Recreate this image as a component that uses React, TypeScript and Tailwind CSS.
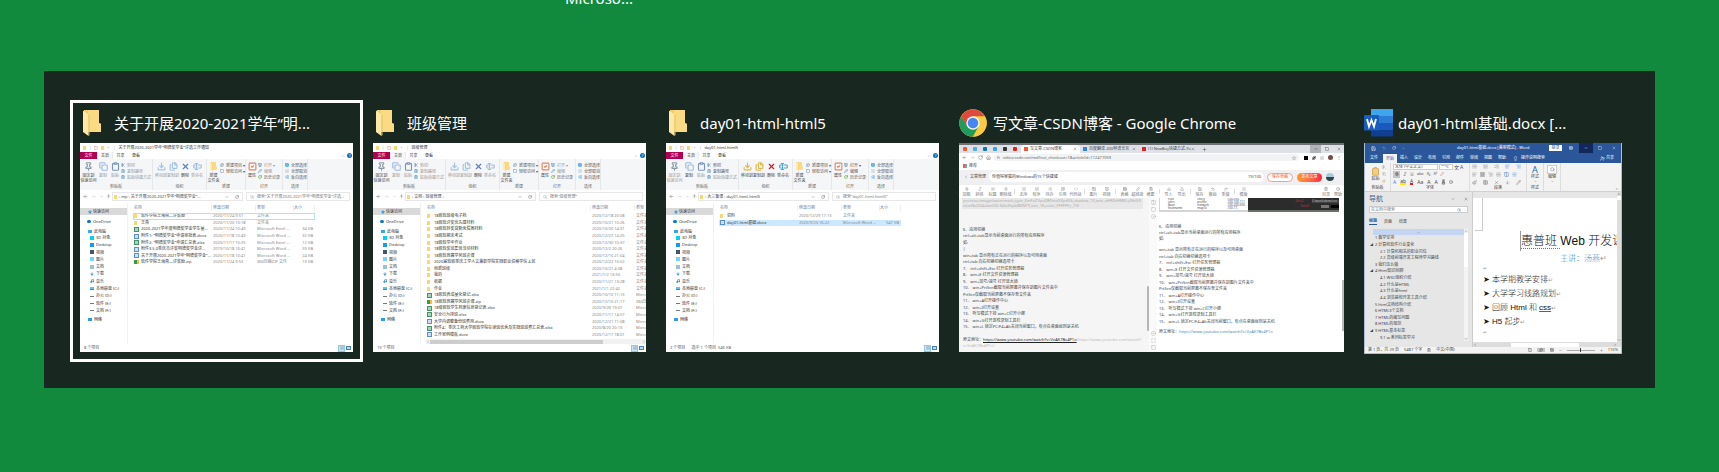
import type { ReactNode } from 'react'
import {
  AlignCenter, AlignJustify, AlignLeft, AlignRight, ArrowDown, ArrowLeft, ArrowRight, ArrowUp, Bold, ChevronDown, ChevronLeft, ChevronRight,
  ChevronUp, CircleDot, Clipboard, ClipboardCopy, ClipboardList, Code, Columns2, Copy, Download, Files, Heading, Home, Image, Italic, Lightbulb,
  Link, List, ListChecks, ListOrdered, Lock, Maximize, Menu, Minus, MonitorPlay, Music, Paintbrush, Pencil, Pin, Plus, Puzzle, Quote, Redo2,
  RotateCw, Save, Scissors, Search, Square, SquareCheck, Star, Strikethrough, Table, TextCursorInput, Underline, Undo2, Upload, UserPlus, X,
} from 'lucide-react'
import type { LucideIcon } from 'lucide-react'
import { clsx } from 'clsx'

type FileKind = 'folder' | 'xls' | 'doc' | 'zip'

type FileEntry = {
  kind: FileKind
  name: string
  date: string
  type: string
  size?: string
  state?: 'focus' | 'selected'
}

const SCHOLARSHIP_FILES: FileEntry[] = [
  { kind: 'folder', name: '软件学院王海燕—评奖励', date: '2020/11/24 9:51', type: '文件夹', state: 'focus' },
  { kind: 'folder', name: '王燕', date: '2020/11/20 10:18', type: '文件夹' },
  { kind: 'xls', name: '2020-2021学年度明德奖学金学生量...', date: '2020/11/24 10:49', type: 'Microsoft Excel ...', size: '34 KB' },
  { kind: 'doc', name: '附件1: “明德奖学金”申请审批表.docx', date: '2020/11/18 10:49', type: 'Microsoft Word ...', size: '32 KB' },
  { kind: 'xls', name: '附件2: “明德奖学金”申请汇总表.xlsx', date: '2020/11/17 10:25', type: 'Microsoft Excel ...', size: '12 KB' },
  { kind: 'doc', name: '附件3.5.0重庆市评奖明德奖学金评...', date: '2019/10/18 16:41', type: 'Microsoft Word ...', size: '59 KB' },
  { kind: 'doc', name: '关于开展2020-2021学年“明德奖学金”...', date: '2020/11/18 10:41', type: 'Microsoft Word ...', size: '24 KB' },
  { kind: 'zip', name: '软件学院王海燕—评奖励.zip', date: '2020/11/24 9:53', type: '360压缩ZIP 文件', size: '13 KB' },
]

const CLASS_FILES: FileEntry[] = [
  { kind: 'folder', name: '18嵌软班级电子档', date: '2020/12/18 20:08', type: '文件夹' },
  { kind: 'folder', name: '18嵌软评奖优先建材料', date: '2020/10/21 10:26', type: '文件夹' },
  { kind: 'folder', name: '18嵌软转奖贷勤免贫困材料', date: '2020/10/20 14:31', type: '文件夹' },
  { kind: 'folder', name: '18嵌软期末考试', date: '2020/12/22 14:25', type: '文件夹' },
  { kind: 'folder', name: '18嵌软学年作业', date: '2020/12/30 10:37', type: '文件夹' },
  { kind: 'folder', name: '18嵌软奖惩集体活动材料', date: '2020/12/2 20:26', type: '文件夹' },
  { kind: 'folder', name: '18嵌软竞赛学风班会课', date: '2020/12/10 21:04', type: '文件夹' },
  { kind: 'folder', name: '2020届软嵌重庆工学人文兼职学院实践职业资格学信 4 区', date: '2020/12/22 10:52', type: '文件夹' },
  { kind: 'folder', name: '创新班级', date: '2020/10/21 4:38', type: '文件夹' },
  { kind: 'folder', name: '我的', date: '2021/1/2 13:50', type: '文件夹' },
  { kind: 'folder', name: '收据', date: '2020/11/21 13:28', type: '文件夹' },
  { kind: 'folder', name: '作业', date: '2021/1/1 22:42', type: '文件夹' },
  { kind: 'xls', name: '18嵌软养成量化登记.xlsx', date: '2020/10/10 11:13', type: 'Micro' },
  { kind: 'zip', name: '18嵌软竞赛学风班会课.zip', date: '2020/12/10 21:17', type: '360压' },
  { kind: 'xls', name: '18级嵌软学生档案信息登记表.xlsx', date: '2020/9/26 19:07', type: 'Micro' },
  { kind: 'xls', name: '安全行为排班.xlsx', date: '2020/11/11 14:57', type: 'Micro' },
  { kind: 'doc', name: '大学内调整备份班费用.docx', date: '2020/12/21 11:08', type: 'Micro' },
  { kind: 'xls', name: '附件4：重庆工商大学嵌软学院在读班优秀及实践班班费汇总表.xlsx', date: '2020/8/20 20:13', type: 'Micro' },
  { kind: 'doc', name: '工作室例模板.docx', date: '2020/12/17 18:01', type: 'Micro' },
]

const HTML_FILES: FileEntry[] = [
  { kind: 'folder', name: '资料', date: '2020/12/29 17:13', type: '文件夹' },
  { kind: 'doc', name: 'day01-html基础.docx', date: '2020/9/23 16:22', type: 'Microsoft Word ...', size: '547 KB', state: 'selected' },
]

const PC_PLACES = [
  { label: '3D 对象', color: 'bg-cyan-400' },
  { label: 'Desktop', color: 'bg-[#1a9bf0]' },
  { label: '视频', color: 'bg-slate-600' },
  { label: '图片', color: 'bg-sky-300' },
  { label: '文档', color: 'bg-[#9dbfd8]' },
]

const DRIVES = ['本地磁盘 (C:)', '办公 (D:)', '软件 (E:)', '文档 (F:)']

const EDITOR_LINES = [
  '6、应用切换', 'ctrl+alt+tab显示当前桌面运行的所有应用程序', '如:', '|', 'win+tab 显示所有正在运行的程序以及可用桌面', 'ctrl+tab 向右切换切换选项卡',
  '7、 ctrl+shift+Esc 打开任务管理器', '8、 win+E 打开文件资源管理器', '9、 win+加号/减号 打开放大镜', '10、 win+PrtScn截取当前屏幕并保存到图片文件夹中',
  'PrtScn仅截取当前屏幕不保存至文件夹', '11、 win+A打开操作中心', '12、 win+I打开设置', '13、 听写模式下按 win+C打开小娜', '14、 win+G打开游戏录制工具栏',
  '15、 win+L 锁定PC/F4+Alt关闭当前窗口，有点在桌面就则是关机', '',
]

const PREVIEW_INTRO = ['6、应用切换', 'ctrl+alt+tab显示当前桌面运行的所有应用程序', '如:']

const PREVIEW_LINES = [
  'win+tab 显示所有正在运行的程序以及可用桌面', 'ctrl+tab 向右切换切换选项卡', '7、 ctrl+shift+Esc 打开任务管理器', '8、 win+E 打开文件资源管理器',
  '9、 win+加号/减号 打开放大镜', '10、 win+PrtScn截取当前屏幕并保存到图片文件夹中', 'PrtScn仅截取当前屏幕不保存至文件夹', '11、 win+A打开操作中心', '12、 win+I打开设置',
  '13、 听写模式下按 win+C打开小娜', '14、 win+G打开游戏录制工具栏', '15、 win+L 锁定PC/F4+Alt关闭当前窗口，有点在桌面就则是关机',
]

const OUTLINE = [
  { text: '1 教学安排', level: 0 },
  { text: '2 计算机软件行业变化', level: 0, open: true },
  { text: '2.1 计算机相关的职业岗位', level: 1 },
  { text: '2.2 高级前端开发工程师学习路线', level: 1 },
  { text: '3 我们怎么做', level: 0 },
  { text: '4 Html知识回顾', level: 0, open: true },
  { text: '4.1 W3C组织介绍', level: 1 },
  { text: '4.2 什么是HTML', level: 1 },
  { text: '4.3 什么是html', level: 1 },
  { text: '4.4 浏览器和开发工具介绍', level: 1 },
  { text: '5 html文档结构介绍', level: 0 },
  { text: '6 HTML3个文档', level: 0 },
  { text: '7 HTML的编写问题', level: 0 },
  { text: '8 HTML的规范', level: 0 },
  { text: '9 HTML基本标签', level: 0, open: true },
  { text: '9.1 w 系列标签学习', level: 1 },
]

function FolderIcon({ className }: { className?: string }) {
  return (
    <svg viewBox="0 0 18 26" className={className} aria-hidden="true">
      <path d="M1 0h15v13l2 1v8H1z" fill="#f3cd68" />
      <path d="M5 0h11v13l2 1v8H5z" fill="#fadb83" />
      <path d="M0 0.500l5.500 4V26L0 22z" fill="#ffe9a9" />
      <path d="M5.500 4.500L6.500 4v21l-1 1z" fill="#e9c05c" />
    </svg>
  )
}

function ChromeIcon({ className }: { className?: string }) {
  return (
    <svg viewBox="0 0 48 48" className={className} aria-hidden="true">
      <circle cx="24" cy="24" r="23.500" fill="#fcc934" />
      <path d="M3.650 12.250A23.500 23.500 0 0 0 24 47.500L33.500 30 24 24 14.500 29.500z" fill="#1f9d58" />
      <path d="M44.350 12.250H24L34 30 24 47.500A23.500 23.500 0 0 0 44.350 12.250z" fill="#fcca3f" />
      <path d="M3.650 12.250L14 30l10-17.750h20.350A23.500 23.500 0 0 0 3.650 12.250z" fill="#de4b3e" />
      <circle cx="24" cy="24" r="11.500" fill="#f3f3f3" />
      <circle cx="24" cy="24" r="9" fill="#4688f1" />
    </svg>
  )
}

function WordIcon({ className }: { className?: string }) {
  return (
    <svg viewBox="0 0 30 28" className={className} aria-hidden="true">
      <path d="M7 0h22v7H7z" fill="#41a5ee" />
      <path d="M7 7h22v7H7z" fill="#2b7cd3" />
      <path d="M7 14h22v7H7z" fill="#185abd" />
      <path d="M7 21h22v6.500H7z" fill="#103f91" />
      <rect y="6" width="15" height="15.500" rx="1" fill="#1a5dbe" />
      <path d="M3 10l2 7.500L7.500 11l2.500 6.500L12 10" fill="none" stroke="#fff" strokeWidth="1.800" />
    </svg>
  )
}

function FileIcon({ kind }: { kind: FileKind }) {
  if (kind === 'folder') return <span className="mr-[2px] h-[4px] w-[3px] shrink-0 bg-[#f8d775]" />
  if (kind === 'zip') {
    return (
      <span className="grid h-[4px] w-[5px] shrink-0 grid-cols-2 bg-[#1b7fc4]">
        <span className="bg-[#3a9a4c]" />
        <span className="bg-[#f0c030]" />
      </span>
    )
  }
  return (
    <span className={clsx('flex h-[5px] w-[5px] shrink-0 border', kind === 'xls' ? 'border-[#3f9668] bg-[#a9d3bb]' : 'border-[#5a8fd0] bg-[#cfe0f5]')} />
  )
}

type RibbonButtonProps = { icon: LucideIcon; label: string; sub?: string; color?: string; dim?: boolean; wide?: boolean }

function RibbonButton({ icon: Icon, label, sub, color = 'text-[#7fa8cc]', dim, wide }: RibbonButtonProps) {
  return (
    <button className={clsx('flex shrink-0 flex-col items-center whitespace-nowrap', wide ? 'w-[17px]' : 'w-[12px]', dim ? 'text-[#999]' : 'text-[#444]')}>
      <Icon size={9} strokeWidth={3} className={clsx('mb-[2px]', color)} />
      <span>{label}</span>
      {sub && <span>{sub}</span>}
    </button>
  )
}

function SmallCommand({ icon: Icon, label, color = 'text-[#6fa3cf]', dim }: RibbonButtonProps) {
  return (
    <button className={clsx('flex h-[6px] items-center gap-[2px] whitespace-nowrap', dim ? 'text-[#999]' : 'text-[#555]')}>
      <Icon size={4} strokeWidth={4} className={color} />
      {label}
    </button>
  )
}

function RibbonGroup({ label, width, children }: { label: string; width: string; children: ReactNode }) {
  return (
    <div className={clsx('flex shrink-0 flex-col border-r border-[#e6e7e8]', width)}>
      <div className="flex h-[25px] items-start pt-[3px]">{children}</div>
      <div className="text-center text-[#666]">{label}</div>
    </div>
  )
}

function ExplorerRibbon({ active }: { active?: boolean }) {
  const dim = !active
  return (
    <div className="flex h-[31px] overflow-hidden bg-[#f5f6f7] text-[4px] leading-[5px]">
      <RibbonGroup label="剪贴板" width="w-[73px]">
        <RibbonButton icon={Pin} label="固定到" sub="快速访问" color="text-[#8b9aa5]" wide dim={active} />
        <RibbonButton icon={Copy} label="复制" color="text-[#9dbbe0]" dim={dim} />
        <RibbonButton icon={Clipboard} label="粘贴" color="text-[#7b94bb]" dim />
        <div className="flex flex-col">
          <SmallCommand icon={Scissors} label="剪切" dim={dim} />
          <SmallCommand icon={ClipboardCopy} label="复制路径" dim={dim} />
          <SmallCommand icon={ClipboardList} label="粘贴快捷方式" dim />
        </div>
      </RibbonGroup>
      <RibbonGroup label="组织" width="w-[54px]">
        <span className="w-[2px]" />
        <RibbonButton icon={Download} label="移动到" color={active ? 'text-[#e3b94c]' : 'text-[#a7c3e3]'} dim={dim} />
        <RibbonButton icon={Files} label="复制到" color={active ? 'text-[#e3b94c]' : 'text-[#a7c3e3]'} dim={dim} />
        <RibbonButton icon={X} label="删除" color={active ? 'text-[#d8161b]' : 'text-[#5b7fb5]'} />
        <RibbonButton icon={TextCursorInput} label="重命名" color={active ? 'text-[#4c9fd8]' : 'text-[#9dbbe0]'} dim={dim} />
      </RibbonGroup>
      <RibbonGroup label="新建" width="w-[39px]">
        <button className="flex w-[13px] flex-col items-center whitespace-nowrap text-[#444]">
          <FolderIcon className="mb-[2px] h-[9px] w-[7px]" />
          <span>新建</span>
          <span>文件夹</span>
        </button>
        <div className="flex flex-col">
          <SmallCommand icon={Files} label="新建项目 ▾" color="text-[#8fa9c4]" />
          <SmallCommand icon={Square} label="轻松访问 ▾" color="text-[#8fa9c4]" />
        </div>
      </RibbonGroup>
      <RibbonGroup label="打开" width="w-[37px]">
        <RibbonButton icon={SquareCheck} label="属性" color="text-[#e08868]" />
        <div className="flex flex-col">
          <SmallCommand icon={MonitorPlay} label="打开 ▾" dim={dim} />
          <SmallCommand icon={Pencil} label="编辑" dim={dim} />
          <SmallCommand icon={RotateCw} label="历史记录" color="text-[#6fae55]" />
        </div>
      </RibbonGroup>
      <RibbonGroup label="选择" width="w-[25px]">
        <div className="flex flex-col pl-[2px]">
          <SmallCommand icon={Table} label="全部选择" color="text-[#4aa6ea]" />
          <SmallCommand icon={List} label="全部取消" color="text-[#b8c6d2]" />
          <SmallCommand icon={ListChecks} label="反向选择" color="text-[#4aa6ea]" />
        </div>
      </RibbonGroup>
    </div>
  )
}

function ExplorerSidebar() {
  return (
    <nav className="w-[48px] shrink-0 border-r border-[#f0f0f0] pt-[5px] text-[4px] leading-[7px] whitespace-nowrap text-[#333]">
      <div className="flex h-[7px] items-center gap-[1px] bg-[#d9d9d9] pl-[8px]">
        <Star size={4} className="fill-[#3b9fe8] text-[#3b9fe8]" />快速访问
      </div>
      <div className="mt-[3px] flex h-[7px] items-center gap-[2px] pl-[7px]">
        <span className="h-[3px] w-[4px] rounded-full bg-[#0a78d0]" />OneDrive
      </div>
      <div className="mt-[3px] flex h-[6px] items-center gap-[2px] pl-[8px]">
        <span className="h-[3px] w-[4px] bg-[#3aa7e5]" />此电脑
      </div>
      <ul className="grid h-[80px] grid-rows-[repeat(11,minmax(0,1fr))] pl-[10px]">
        {PC_PLACES.map(place => (
          <li key={place.label} className="flex items-center gap-[2px]">
            <span className={clsx('h-[4px] w-[4px]', place.color)} />{place.label}
          </li>
        ))}
        <li className="flex items-center gap-[2px]"><ArrowDown size={4} strokeWidth={5} className="text-[#2688d8]" />下载</li>
        <li className="flex items-center gap-[2px]"><Music size={4} strokeWidth={4} className="text-[#2688d8]" />音乐</li>
        {DRIVES.map((drive, i) => (
          <li key={drive} className="flex items-center gap-[2px]">
            <span className={clsx('w-[4px] border-b', i === 0 ? 'h-[3px] border-[#777] bg-[#5cc3ee]' : 'h-[2px] border-[#777]')} />{drive}
          </li>
        ))}
      </ul>
      <div className="mt-[2px] flex h-[7px] items-center gap-[2px] pl-[8px]">
        <span className="h-[3px] w-[4px] bg-[#2f9be0]" />网络
      </div>
    </nav>
  )
}

type ExplorerProps = { title: string; crumbs: string; search: string; files: FileEntry[]; status: string; wideName?: boolean; active?: boolean }

function ExplorerWindow({ title, crumbs, search, files, status, wideName, active }: ExplorerProps) {
  const nameWidth = wideName ? 'w-[165px]' : 'w-[79px]'
  return (
    <div className="flex h-[209px] w-[273px] flex-col overflow-hidden bg-white text-[4px] leading-[6px] text-[#333]">
      <div className="flex h-[9px] items-center gap-[3px] pl-[3px] whitespace-nowrap">
        <span className="h-[4px] w-[3px] bg-[#f8d775]" />
        <span className="text-[#aaa]">|</span>
        <SquareCheck size={4} className="text-[#d07a5c]" />
        <span className="h-[4px] w-[3px] bg-[#f8d775]" />
        <ChevronDown size={3} />
        <span className="text-[#aaa]">|</span>
        <span>{title}</span>
      </div>
      <div className="flex h-[7px] items-center text-center">
        <button className="h-full w-[17px] bg-[#b0004f] text-white">文件</button>
        <button className="h-full w-[16px] border-x border-[#e8e9ea] bg-[#f5f6f7]">主页</button>
        <button className="w-[15px]">共享</button>
        <button className="w-[16px]">查看</button>
        <ChevronUp size={4} className="mr-[2px] ml-auto text-[#888]" />
        <span className="mr-[1px] flex h-[5px] w-[5px] items-center justify-center rounded-full bg-[#0c6fc4] text-white">?</span>
      </div>
      <ExplorerRibbon active={active} />
      <div className="flex h-[13px] items-center pr-[3px] text-[#666]">
        <div className="flex w-[32px] items-center justify-between pr-[1px] pl-[3px]">
          <ArrowLeft size={5} /><ArrowRight size={5} className="text-[#ccc]" /><ChevronDown size={3} /><ArrowUp size={5} />
        </div>
        <div className="flex h-[9px] w-[131px] items-center gap-[2px] border border-[#e7e7e7] px-[1px] whitespace-nowrap text-[#444]">
          <span className="h-[4px] w-[3px] bg-[#f8d775]" />
          <span>{crumbs}</span>
          <ChevronDown size={4} className="mr-[4px] ml-auto" />
          <RotateCw size={4} className="mr-[2px]" />
        </div>
        <label className="ml-[3px] flex h-[9px] min-w-0 flex-1 items-center gap-[3px] border border-[#e7e7e7] pl-[3px]">
          <Search size={4} className="shrink-0 text-[#888]" />
          <input aria-label="搜索" placeholder={search} className="w-full min-w-0 outline-none placeholder:text-[#777]" />
        </label>
      </div>
      <div className="flex min-h-0 flex-1">
        <ExplorerSidebar />
        <div className="flex min-w-0 flex-1 flex-col overflow-hidden pl-[5px]">
          <table className="block text-left whitespace-nowrap">
            <thead className="block">
              <tr className="flex h-[9px] items-center text-[#6b7f9a]">
                <th className={clsx('shrink-0 border-r border-[#eee] pl-[1px] font-normal', nameWidth)}>名称</th>
                <th className="w-[44px] shrink-0 border-r border-[#eee] pl-[1px] font-normal">修改日期</th>
                <th className={clsx('shrink-0 pl-[1px] font-normal', !wideName && 'w-[38px] border-r border-[#eee]')}>类型</th>
                {!wideName && <th className="w-[21px] border-r border-[#eee] font-normal">大小</th>}
              </tr>
            </thead>
            <tbody className="mt-[1px] grid h-[125px] grid-rows-[repeat(19,minmax(0,1fr))]">
              {files.map(file => (
                <tr
                  key={file.name}
                  className={clsx(
                    'flex items-center',
                    !wideName && 'w-[182px]',
                    file.state === 'focus' && 'outline -outline-offset-1 outline-[#b5def7]',
                    file.state === 'selected' && 'bg-[#cce8ff]',
                  )}
                >
                  <td className={clsx('flex shrink-0 items-center gap-[2px] pl-[1px]', nameWidth)}>
                    <FileIcon kind={file.kind} />{file.name}
                  </td>
                  <td className="w-[44px] shrink-0 pl-[1px] text-[#888]">{file.date}</td>
                  <td className={clsx('shrink-0 pl-[1px] text-[#888]', !wideName && 'w-[38px]')}>{file.type}</td>
                  {!wideName && <td className="w-[19px] text-right text-[#888]">{file.size}</td>}
                </tr>
              ))}
            </tbody>
          </table>
          {wideName && (
            <div className="mt-[1px] flex h-[5px] items-center bg-[#f1f1f1] text-[#666]">
              <ChevronLeft size={4} /><span className="h-[4px] w-[173px] bg-[#cdcdcd]" /><ChevronRight size={4} className="ml-auto" />
            </div>
          )}
        </div>
      </div>
      <div className="flex h-[8px] items-center pl-[4px] whitespace-pre text-[#555]">
        {status}
        <span className="mr-[1px] ml-auto flex h-[7px] w-[7px] items-center justify-center border border-[#8cc8ec] bg-[#cde8f8]"><List size={4} /></span>
        <span className="mr-[2px] h-[4px] w-[5px] border border-[#4a7fb0] bg-[#bcd6ee]" />
      </div>
    </div>
  )
}

const FAVICONS = ['bg-[#fc5531]', 'bg-[#4aaee8]', 'bg-[#0a74c4]', 'bg-[#38a1ea]', 'bg-[#333]', 'bg-[#e32020]']

const MD_TOOLS: ({ icon: LucideIcon; label: string } | null)[] = [
  { icon: Bold, label: '加粗' }, { icon: Italic, label: '斜体' }, { icon: Heading, label: '标题' }, { icon: Strikethrough, label: '删除线' }, null,
  { icon: List, label: '无序' }, { icon: ListOrdered, label: '有序' }, { icon: ListChecks, label: '待办' }, { icon: Quote, label: '引用' }, { icon: Code, label: '代码块' }, null,
  { icon: Image, label: '图片' }, { icon: MonitorPlay, label: '视频' }, null,
  { icon: Table, label: '表格' }, { icon: Link, label: '超链接' }, { icon: ClipboardList, label: '摘要' }, null,
  { icon: Download, label: '导入' }, { icon: Upload, label: '导出' }, null,
  { icon: Save, label: '保存' }, { icon: Undo2, label: '撤销' }, { icon: Redo2, label: '重做' }, null,
  { icon: Menu, label: '模版' },
]

function ChromeTab({ color, title, active }: { color: string; title: string; active?: boolean }) {
  return (
    <div className={clsx('flex h-[8px] w-[59px] shrink-0 items-center gap-[2px] px-[3px]', active && 'rounded-t-sm bg-white')}>
      <span className={clsx('h-[4px] w-[4px] shrink-0', color)} />
      <span className="min-w-0 flex-1 whitespace-nowrap">{title}</span>
      <X size={4} className="shrink-0" />
    </div>
  )
}

function ChromeWindow() {
  return (
    <div className="flex h-[209px] w-[385px] flex-col overflow-hidden bg-white text-[4px] leading-[6px] text-[#444]">
      <div className="flex h-[10px] items-end border-t-2 border-[#6d7176] bg-[#dee1e6]">
        <div className="flex h-[8px] w-[62px] items-center gap-[6px] pl-[4px]">
          {FAVICONS.map(color => <span key={color} className={clsx('h-[4px] w-[4px] rounded-[1px]', color)} />)}
        </div>
        <ChromeTab color="bg-[#fc5531]" title="写文章-CSDN博客" active />
        <ChromeTab color="bg-[#2f86e8]" title="百度翻译-200种语言互" />
        <ChromeTab color="bg-[#e32020]" title="(1) NewBoy快捷方式-Yo" />
        <Plus size={5} className="mb-[1px] ml-[4px]" />
        <div className="ml-auto flex h-[8px] items-center text-[#333]">
          <span className="flex h-full w-[11px] items-center justify-center bg-[#b1b4b8]"><Minus size={4} /></span>
          <span className="flex w-[12px] justify-center"><Square size={4} /></span>
          <span className="flex w-[11px] justify-center"><X size={4} /></span>
        </div>
      </div>
      <div className="flex h-[9px] items-center gap-[3px] px-[3px] text-[#666]">
        <ArrowLeft size={5} /><ArrowRight size={5} className="text-[#bbb]" /><RotateCw size={5} /><Home size={5} />
        <div className="flex h-[7px] flex-1 items-center gap-[3px] rounded-full bg-[#f1f3f4] px-[3px]">
          <Lock size={3} />editor.csdn.net/md?not_checkout=1&amp;articleId=112477059
          <Star size={4} className="ml-auto" />
        </div>
        <div className="flex items-center gap-[4px] pl-[2px]">
          <span className="h-[4px] w-[4px] bg-black" />
          <Puzzle size={4} className="fill-[#444]" />
          <List size={4} />
          <span className="h-[5px] w-[5px] rounded-full bg-[#7a4a48]" />
          <span>⋮</span>
        </div>
      </div>
      <div className="flex h-[8px] items-center gap-[2px] pl-[4px]">
        <span className="h-[4px] w-[4px] border-l-2 border-[#e7604f] bg-[#63a7e8]" />推荐
      </div>
      <div className="flex h-[15px] items-center border-b border-[#eee] bg-[#f0f0f2] pl-[5px]">
        <a href="#articles" className="flex w-[25px] items-center gap-[2px] whitespace-nowrap"><ChevronLeft size={4} />文章管理</a>
        <label className="flex h-[10px] min-w-0 flex-1 items-center rounded-full bg-white px-[3px]">
          <input aria-label="文章标题" defaultValue="你值得掌握的Windows的15个快捷键" className="min-w-0 flex-1 outline-none" />
          <span>19/100</span>
        </label>
        <button className="ml-[3px] h-[9px] w-[26px] rounded-full border border-[#f6a093] bg-white text-[#f0503a]">保存草稿</button>
        <button className="ml-[4px] h-[9px] w-[25px] rounded-full bg-linear-to-r from-[#ff9a2e] to-[#fc1944] text-white">发布文章</button>
        <span className="mr-[10px] ml-[4px] h-[8px] w-[8px] rounded-full border-b-4 border-[#2f4550] bg-[#a8cbd8]" />
      </div>
      <div className="flex h-[13px] items-center pl-[1px] leading-[5px]">
        {MD_TOOLS.map((tool, i) => tool ? (
          <button key={tool.label} className="flex w-[13px] shrink-0 flex-col items-center gap-[1px] whitespace-nowrap text-[#777]">
            <tool.icon size={4} /><span>{tool.label}</span>
          </button>
        ) : <span key={i} className="mx-[2px] h-[5px] w-px bg-[#ddd]" />)}
        <div className="ml-auto flex text-[#777]">
          <button className="flex w-[12px] flex-col items-center gap-[1px]"><ClipboardList size={4} />目录</button>
          <button className="flex w-[12px] flex-col items-center gap-[1px]"><CircleDot size={4} />帮助</button>
        </div>
      </div>
      <div className="flex min-h-0 flex-1">
        <div className="flex w-[190px] flex-col bg-[#f5f5f5]">
          <div className="mr-[6px] ml-[3px] h-[11px] overflow-hidden bg-[#e8e8e8] pl-[1px] leading-[5px] break-all text-[#aaa]">
            process=image/watermark,type_ZmFuZ3poZW5naGVpdGk,shadow_10,text_aHR0cHM6Ly9ibG9nLmNzZG4ubmV0L3dlaXhpbl80NTY,size_16,color_FFFFFF,t_70)
          </div>
          <div className="flex flex-1">
            <div className="mt-[18px] min-w-0 flex-1 pl-[4px]">
              <div className="grid h-[110px] grid-rows-[repeat(17,minmax(0,1fr))] whitespace-nowrap">
                {EDITOR_LINES.map((line, i) => <p key={i}>{line}</p>)}
              </div>
              <p className="whitespace-nowrap">
                原文地址：<a href="#source" className="text-[#222] underline">https://www.youtube.com/watch?v=VeAK7Bv4P1o</a>
                <span className="text-[#bbb]">(https://www.youtube.com/watch?</span>
              </p>
              <p className="text-[#bbb]">v=VeAK7Bv4P1o)</p>
            </div>
            <span className="mt-[77px] h-[45px] w-[2px] shrink-0 rounded-full bg-[#b5b5b5]" />
          </div>
        </div>
        <div className="flex w-[8px] flex-col items-center gap-[2px] bg-[#fafafa] pt-[2px] pb-[2px] text-[#aaa]">
          <Columns2 size={5} /><Square size={5} /><CircleDot size={5} />
          <span className="flex-1" />
          <CircleDot size={5} /><Maximize size={5} /><Square size={5} />
        </div>
        <div className="flex min-w-0 flex-1">
          <div className="min-w-0 flex-1 overflow-hidden pl-[2px] whitespace-nowrap">
            <div className="flex h-[14px] w-[180px]">
              <div className="grid w-[89px] grid-cols-3 gap-x-2 overflow-hidden border-b-2 border-l border-[#d5d5d5] pl-[8px] text-[3px] leading-[3px]">
                <span>root</span><span>short</span><span>-100.250.</span>
                <span>john</span><span>profile</span><span>-100.100.111.</span>
                <span>dave</span><span>network</span><span>-100.200.500.</span>
                <span>hostname</span><span>mapTo</span><span>-100.17.</span>
              </div>
              <div className="flex flex-1 flex-col justify-between bg-[#2b2c2b] pt-[2px] text-[3px] leading-[3px]">
                <div className="flex justify-end gap-[8px] text-[#bbb]">
                  <span className="text-[#d83a50]">Ctrl+C</span><span className="w-[27px] bg-[#444]">C:\work\demo\src</span>
                </div>
                <div className="flex justify-end gap-[2px]">
                  <span className="text-[#d83a50]">Ctrl+V</span><span className="ml-[10px] h-[3px] w-[8px] bg-[#777]" /><span className="h-[3px] w-[8px] bg-black" />
                </div>
                <span className="h-[2px] bg-[#687068]" />
              </div>
            </div>
            <div className="mt-[12px]">{PREVIEW_INTRO.map(line => <p key={line}>{line}</p>)}</div>
            <div className="mt-[5px] grid h-[78px] grid-rows-[repeat(12,minmax(0,1fr))]">
              {PREVIEW_LINES.map(line => <p key={line}>{line}</p>)}
            </div>
            <p className="mt-[4px]">原文地址：<a href="#source" className="text-[#4a8ab8]">https://www.youtube.com/watch?v=VeAK7Bv4P1o</a></p>
          </div>
          <span className="mt-[82px] h-[51px] w-[2px] bg-[#bbb]" />
        </div>
      </div>
    </div>
  )
}

function WordRibbonGroup({ label, width, children }: { label: string; width: string; children: ReactNode }) {
  return (
    <div className={clsx('flex shrink-0 flex-col border-r border-[#ddd] px-[2px]', width)}>
      <div className="flex h-[22px] items-center justify-center">{children}</div>
      <div className="text-center leading-[5px]">{label}</div>
    </div>
  )
}

function WordWindow() {
  return (
    <div className="flex h-[211px] w-[258px] flex-col overflow-hidden border-x border-[#a9bcd8] bg-[#e6e6e6] text-[4px] leading-[6px] text-[#444]">
      <div className="flex h-[10px] items-center bg-[#2b579a] text-white">
        <div className="flex w-[80px] items-center gap-[6px] pl-[6px]">
          <Save size={5} /><Undo2 size={4} className="text-[#8ea8cf]" /><RotateCw size={4} /><ChevronDown size={3} />
        </div>
        <span className="flex-1 pl-[12px] whitespace-nowrap">day01-html基础.docx [兼容模式] - Word</span>
        <button className="h-[6px] w-[13px] bg-white text-[#2b579a]">登录</button>
        <span className="flex w-[17px] justify-center"><Table size={4} /></span>
        <span className="flex h-full w-[14px] items-center justify-center bg-[#12285a]"><Minus size={4} /></span>
        <span className="flex w-[14px] justify-center"><Square size={4} /></span>
        <span className="flex w-[14px] justify-center"><X size={4} /></span>
      </div>
      <div className="flex h-[10px] items-center bg-[#2b579a] text-center text-white">
        <button className="w-[18px]">文件</button>
        <button className="h-[9px] w-[14px] self-end bg-[#f3f3f3] text-[#2b579a]">开始</button>
        {['插入', '设计', '布局', '引用', '邮件', '审阅', '视图', '帮助'].map(tab => <button key={tab} className="w-[14px]">{tab}</button>)}
        <Lightbulb size={5} className="ml-[4px]" />
        <span className="ml-[3px] whitespace-nowrap">操作说明搜索</span>
        <button className="mr-[7px] ml-auto flex items-center gap-[1px]"><UserPlus size={5} />共享</button>
      </div>
      <div className="flex h-[29px] border-b border-[#d0d0d0] bg-[#f3f3f3]">
        <WordRibbonGroup label="剪贴板" width="w-[26px]">
          <button className="flex w-[13px] flex-col items-center"><Clipboard size={9} className="fill-[#f2ce7d] text-[#c99a45]" />粘贴</button>
          <div className="flex flex-col gap-[3px] text-[#999]"><Scissors size={4} /><Copy size={4} /><Paintbrush size={4} className="text-[#d9a24c]" /></div>
        </WordRibbonGroup>
        <WordRibbonGroup label="字体" width="w-[79px]">
          <div className="flex w-full flex-col gap-[1px]">
            <div className="flex h-[6px] items-center gap-[1px]">
              <select aria-label="字体" className="h-[6px] w-[45px] appearance-none border border-[#ccc] bg-white pl-[1px] leading-[4px]"><option>宋体 (中文正文)</option></select>
              <select aria-label="字号" className="h-[6px] w-[14px] appearance-none border border-[#ccc] bg-white pl-[1px] leading-[4px]"><option>一号</option></select>
              <span className="text-[5px]">文</span><span className="text-[5px] text-[#2b579a]">A</span>
            </div>
            <div className="flex h-[7px] items-center gap-[3px]">
              <span className="flex h-[7px] w-[7px] items-center justify-center bg-[#c5c5c5]"><Bold size={4} strokeWidth={3} /></span>
              <Italic size={4} /><Underline size={4} /><span>abc</span><span>X₂</span><span>X²</span><Pencil size={4} className="text-[#d8607a]" />
            </div>
            <div className="flex h-[6px] items-center gap-[4px] text-[5px]">
              <span className="text-[#4a86d8]">A</span>
              <span className="h-[6px] border-b-2 border-[#ffee00] leading-[4px]">ab</span>
              <span className="h-[6px] border-b-2 border-[#e02020] leading-[4px]">A</span>
              <span>Aa</span><span>A</span><span>A</span><span className="bg-[#bbb]">A</span><CircleDot size={4} />
            </div>
          </div>
        </WordRibbonGroup>
        <WordRibbonGroup label="段落" width="w-[57px]">
          <div className="flex w-full flex-col gap-[3px] text-[#777]">
            <div className="flex gap-[6px]"><List size={5} /><ListOrdered size={5} /><ListChecks size={5} /><AlignLeft size={5} className="text-[#4a86c8]" /><AlignRight size={5} className="text-[#4a86c8]" /></div>
            <div className="flex gap-[3px]"><AlignLeft size={5} /><AlignCenter size={5} className="bg-[#c5c5c5]" /><AlignRight size={5} /><AlignJustify size={5} /><Columns2 size={5} className="text-[#4a6fa8]" /><Menu size={5} className="text-[#4a86c8]" /></div>
            <div className="flex gap-[6px]"><Paintbrush size={5} /><Table size={5} /><X size={5} /><ArrowDown size={5} className="text-[#4a86c8]" /><Pencil size={5} /></div>
          </div>
        </WordRibbonGroup>
        <WordRibbonGroup label="样式" width="w-[17px]">
          <button className="flex flex-col items-center"><span className="text-[9px] leading-[9px] text-[#2f66ad]">A</span>样式<ChevronDown size={3} /></button>
        </WordRibbonGroup>
        <WordRibbonGroup label="" width="w-[17px]">
          <button className="flex flex-col items-center"><span className="flex h-[9px] w-[10px] items-center justify-center border border-[#ccc] bg-white"><Search size={5} className="text-[#2f66ad]" /></span>编辑<ChevronDown size={3} /></button>
        </WordRibbonGroup>
        <ChevronUp size={4} className="mr-[2px] ml-auto self-end" />
      </div>
      <div className="flex min-h-0 flex-1">
        <div className="flex w-[107px] shrink-0 flex-col pl-[4px]">
          <div className="flex h-[14px] items-center gap-[9px] pr-[4px]">
            <h3 className="mr-auto text-[7px] text-[#4a6488]">导航</h3><ChevronDown size={4} /><X size={4} />
          </div>
          <label className="mr-[4px] flex h-[7px] items-center border border-[#ccc] bg-white px-[1px]">
            <input aria-label="在文档中搜索" placeholder="在文档中搜索" className="min-w-0 flex-1 outline-none placeholder:text-[#777]" />
            <Search size={4} className="mr-[3px] text-[#2f66ad]" /><ChevronDown size={2} />
          </label>
          <div className="mt-[4px] flex h-[10px] gap-[7px] leading-[7px]">
            <button className="h-[8px] border-b border-[#2b579a] font-bold text-[#2b579a]">标题</button><button className="h-[8px]">页面</button><button className="h-[8px]">结果</button>
          </div>
          <div className="mt-[2px] flex">
            <div className="w-[95px] shrink-0">
              <div className="ml-[4px] flex h-[6px] items-center justify-center bg-[#c3d5f3]"><ChevronUp size={3} /></div>
              <ul className="grid h-[106px] grid-rows-[repeat(16,minmax(0,1fr))] whitespace-nowrap">
                {OUTLINE.map(item => (
                  <li key={item.text} className={clsx('flex items-center', item.level ? 'pl-[11px]' : 'pl-[1px]')}>
                    {!item.level && <span className="w-[5px] text-[3px]">{item.open && '◢'}</span>}{item.text}
                  </li>
                ))}
              </ul>
            </div>
            <div className="flex w-[4px] flex-col items-center bg-[#f3f3f3]">
              <ChevronUp size={4} /><span className="h-[34px] w-[4px] bg-white" /><ChevronDown size={4} className="mt-auto" />
            </div>
          </div>
        </div>
        <div className="flex min-w-0 flex-1 flex-col border-l border-[#ccc]">
          <div className="flex min-h-0 flex-1">
            <div className="flex min-w-0 flex-1 flex-col overflow-hidden pt-[6px]">
              <div className="flex-1 bg-white font-['Liberation_Sans','Noto_Sans_CJK_SC',sans-serif] text-[8px] font-light whitespace-nowrap text-[#111]">
                <div className="ml-[2px] h-[33px] w-[8px] border-r border-b border-[#ccc]" />
                <h2 className="ml-[47px] border-l border-[#999] text-[12px] leading-[20px]">
                  <span className="border-b border-dotted border-[#4a78d8]">惠普班 </span><b>Web</b> 开发课
                </h2>
                <p className="mt-[3px] pl-[87px] leading-[10px] text-[#3c7fcf]">主讲：汤燕<span className="text-[#999]">↵</span></p>
                <p className="pl-[10px] text-[5px] leading-[9px] text-[#999]">↵</p>
                <ul className="leading-[14px]">
                  {['本学期教学安排', '大学学习线路规划', '回顾 Html 和 css', 'H5 起步'].map(item => (
                    <li key={item} className="flex pl-[10px]">
                      <span className="w-[9px]">➤</span>
                      {item.endsWith('css') ? <span>回顾 Html 和 <u className="decoration-[#d03030] decoration-1">css</u></span> : item}
                      <span className="text-[6px] text-[#999]">↵</span>
                    </li>
                  ))}
                </ul>
                <p className="pl-[10px] text-[5px] leading-[6px] text-[#999]">↵</p>
              </div>
            </div>
            <div className="flex w-[4px] flex-col items-center bg-[#ddd]">
              <ChevronUp size={4} /><span className="h-[4px] w-full bg-white" /><ChevronDown size={4} className="mt-auto" />
            </div>
          </div>
          <div className="flex h-[5px] items-center justify-between bg-[#ddd] pr-[4px]">
            <ChevronLeft size={4} /><span className="h-[4px] w-[68px] bg-white" /><ChevronRight size={4} />
          </div>
        </div>
      </div>
      <div className="flex h-[7px] items-center gap-[5px] border-b border-[#a9bcd8] bg-[#f3f3f3] px-[3px] whitespace-nowrap">
        <span>第 1 页，共 29 页</span><span>5487 个字</span><ClipboardList size={4} /><span>中文(中国)</span>
        <span className="ml-auto"><Columns2 size={4} /></span><span className="bg-[#c5c5c5] px-[2px]"><Files size={4} /></span><Table size={4} />
        <Minus size={3} />
        <span className="flex h-px w-[28px] items-center justify-center bg-[#aaa]"><span className="h-[4px] w-px bg-[#444]" /></span>
        <Plus size={3} /><span>110%</span>
      </div>
    </div>
  )
}

function TaskCard({ icon, title, selected, children }: { icon: ReactNode; title: string; selected?: boolean; children: ReactNode }) {
  return (
    <section className={clsx('shrink-0 border-[3px] px-[7px] pb-[7px]', selected ? 'border-white' : 'border-transparent')}>
      <header className="flex h-[40px] items-center">
        <span className="w-[34px] shrink-0">{icon}</span>
        <h2 className="text-[15px] leading-5 whitespace-nowrap text-white">{title}</h2>
      </header>
      {children}
    </section>
  )
}

export default function App() {
  const folder = <FolderIcon className="ml-[3px] h-[26px] w-[18px]" />
  return (
    <div className="min-h-screen overflow-hidden bg-[#118a3e] font-['Noto_Sans','Noto_Sans_CJK_SC',sans-serif]">
      <div className="flex h-[8px] items-end overflow-hidden pl-[565px] text-[15px] leading-5 text-white">Microso...</div>
      <main className="mt-[63px] mr-[64px] ml-[44px] flex items-start overflow-hidden bg-[#18271f] pt-[29px] pb-[24px] pl-[26px]">
        <TaskCard icon={folder} title="关于开展2020-2021学年“明..." selected>
          <ExplorerWindow
            title="关于开展2020-2021学年“明德奖学金”评选工作通知"
            crumbs="› mp › 关于开展2020-2021学年“明德奖学金”..."
            search="搜索“关于开展2020-2021学年“明德奖学金”评选..."
            files={SCHOLARSHIP_FILES}
            status="8 个项目"
          />
        </TaskCard>
        <TaskCard icon={folder} title="班级管理">
          <ExplorerWindow title="班级管理" crumbs="› 文档 › 班级管理 ›" search="搜索“班级管理”" files={CLASS_FILES} status="19 个项目" wideName />
        </TaskCard>
        <TaskCard icon={folder} title="day01-html-html5">
          <ExplorerWindow
            title="day01-html-html5"
            crumbs="› 大三备课 › day01-html-html5"
            search="搜索“day01-html-html5”"
            files={HTML_FILES}
            status="2 个项目      选中 1 个项目  546 KB"
            active
          />
        </TaskCard>
        <TaskCard icon={<ChromeIcon className="h-[28px] w-[28px]" />} title="写文章-CSDN博客 - Google Chrome">
          <ChromeWindow />
        </TaskCard>
        <TaskCard icon={<WordIcon className="h-[28px] w-[30px]" />} title="day01-html基础.docx [...">
          <WordWindow />
        </TaskCard>
      </main>
    </div>
  )
}
